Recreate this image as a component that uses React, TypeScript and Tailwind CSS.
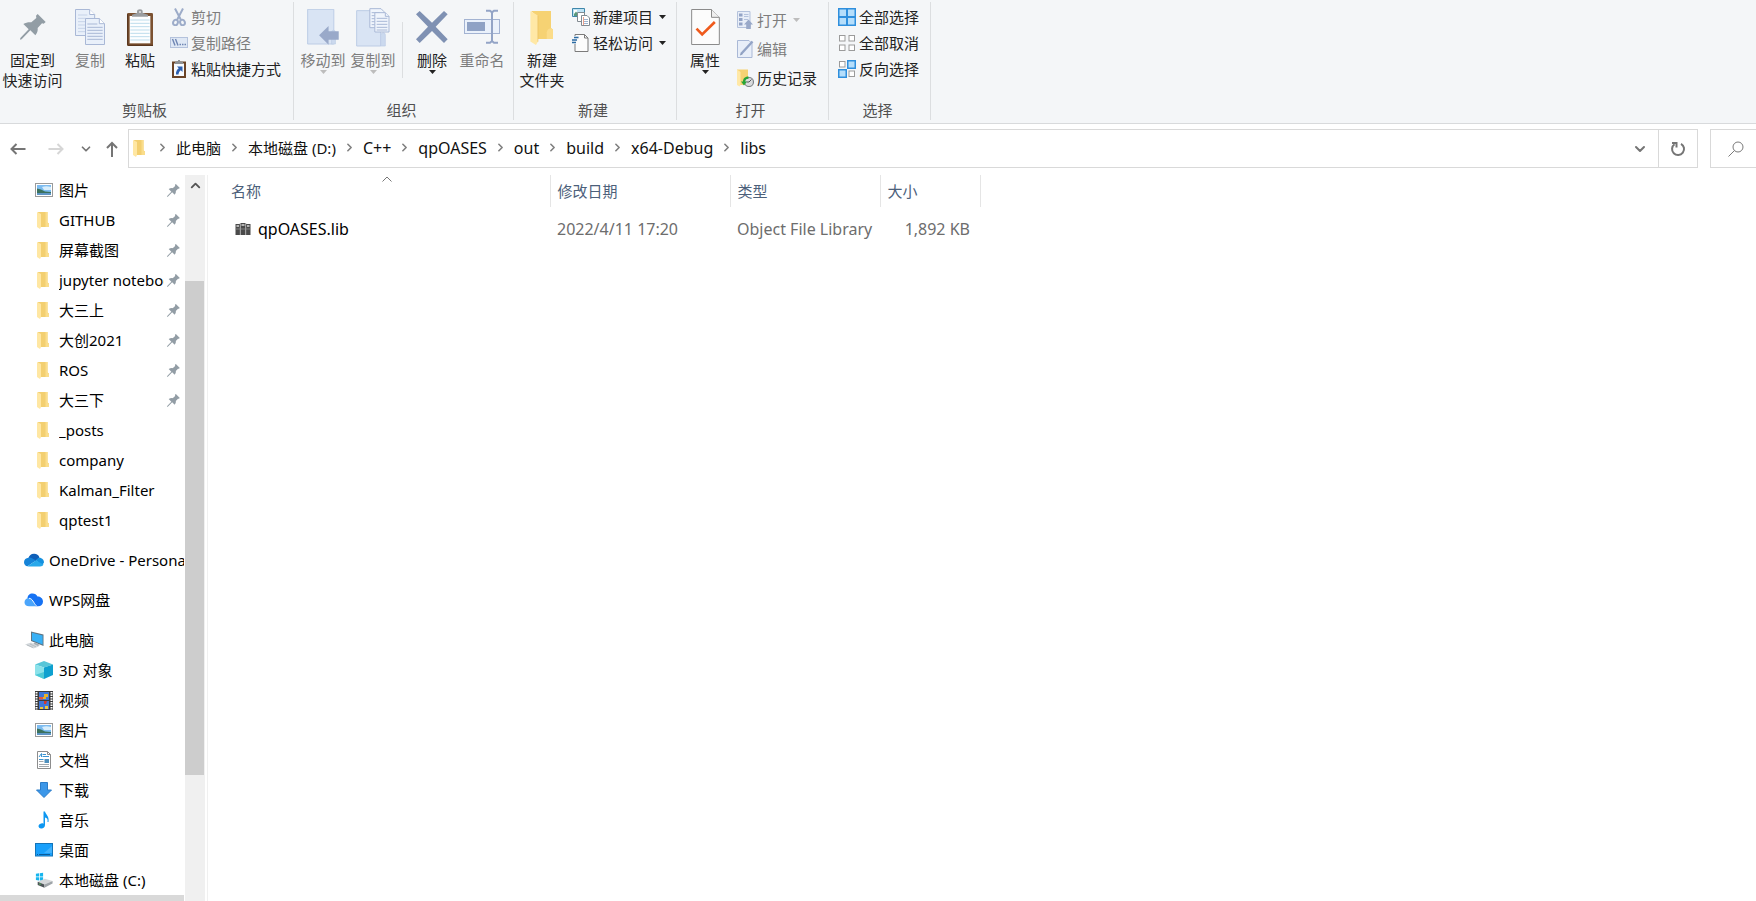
import type { ReactNode } from 'react';
import { ChevronDown, ChevronRight, ChevronUp } from 'lucide-react';

/* ---------- icons ---------- */

const PinIcon = ({ className }: { className: string }) => (
  <svg viewBox="60 42 78 78" className={className} aria-hidden="true">
    <path
      fill="#929da5"
      d="M113 42 137 66 131 71 126 70 113 84C114 92 112 99 106 106L91 91 65 118 60 119 61 114 86 88 70 72C78 67 87 66 94 67L109 54 108 47Z"
    />
  </svg>
);

const CopyIcon = () => (
  <svg viewBox="228 27 90 108" className="h-9 w-[30px]" aria-hidden="true">
    <g fill="#e9f0fa" stroke="#a9b8d6" strokeWidth="3">
      <path d="M229.500 28.500H272L287 43.500V106.500H229.500Z" />
      <path d="M272 28.500V43.500H287" fill="#fff" />
      <path d="M237 45H265M237 55H260M237 65H260M237 75H260M237 85H260M237 95H260" stroke="#c6d3e8" />
      <path d="M259.500 55.500H301L316.500 71V133.500H259.500Z" />
      <path d="M301 55.500V71H316.500" fill="#fff" />
      <path d="M265 72H295M265 82H311M265 91H311M265 100H311M265 109H311M265 118H311" stroke="#a9b8d6" />
    </g>
  </svg>
);

const PasteIcon = () => (
  <svg viewBox="384 24 78 111" className="h-[37px] w-[26px]" aria-hidden="true">
    <rect x="384" y="36" width="78" height="99" rx="4" fill="#7b5131" />
    <path d="M384 130V40h4v91h74v4h-74Z" fill="#59371f" />
    <path d="M392 45H454V127H392Z" fill="#fdfeff" />
    <path d="M394 57H452M394 67H452M394 77H452M394 87H452M394 97H452M394 107H452M394 117H452" stroke="#bddcec" strokeWidth="3" />
    <path d="M399 47V41L414 36V31C414 27 418 25 423 25S431 27 431 31V36L447 41V47Z" fill="#9a9da0" />
    <circle cx="423" cy="33" r="3" fill="#e6e6e6" />
  </svg>
);

const ScissorsIcon = () => (
  <svg viewBox="0 0 18 18" className="h-[18px] w-[18px]" fill="none" stroke="#9dacc9" aria-hidden="true">
    <path d="M5 0.500 11 12M13 0.500 7 12" strokeWidth="2" />
    <ellipse cx="5.500" cy="14.500" rx="2.300" ry="2.800" strokeWidth="2" transform="rotate(20 5.500 14.500)" />
    <ellipse cx="12.500" cy="14.500" rx="2.300" ry="2.800" strokeWidth="2" transform="rotate(-20 12.500 14.500)" />
  </svg>
);

const PathIcon = () => (
  <svg viewBox="0 0 18 18" className="h-[18px] w-[18px]" aria-hidden="true">
    <rect x="0.500" y="3.500" width="17" height="10" fill="#dfe8f5" stroke="#b4c2dc" />
    <path d="M2.500 5 5 11.500M5.500 5 8 11.500" stroke="#6f86b4" strokeWidth="1.400" />
    <path d="M9.500 10.500h1.500M12 10.500h1.500M14.500 10.500H16" stroke="#6f86b4" strokeWidth="1.500" />
  </svg>
);

const PasteShortcutIcon = () => (
  <svg viewBox="0 0 18 18" className="h-[18px] w-[18px]" aria-hidden="true">
    <path d="M3 2.500H15V17H3Z" fill="#f8fbff" stroke="#6b4427" strokeWidth="2" />
    <path d="M5 4V2L8 1V-0.500H10V1L13 2V4Z" fill="#8d9093" />
    <path d="M7 6.500H12.500V12L10.800 10.300C9 11.500 8.800 13 8.500 14.500H6C5.700 11.500 7 9.500 8.800 8.300Z" fill="#2b5fb0" />
  </svg>
);

const MoveToIcon = () => (
  <svg viewBox="350 27 99 110" className="h-9 w-[33px]" aria-hidden="true">
    <path d="M351 28H431V134H351Z" fill="#d9e4f4" stroke="#bccce5" strokeWidth="3" />
    <path d="M424 134V100Q424 92 430 92T436 98V134Z" fill="#cbd9ee" stroke="#bccce5" strokeWidth="2" />
    <path d="M386 107 415 79V95H446V121H415V136Z" fill="#99a9c9" />
  </svg>
);

const CopyToIcon = () => (
  <svg viewBox="209 20 102 117" className="h-[39px] w-[34px]" aria-hidden="true">
    <path d="M211 28H283V134H211Z" fill="#d9e4f4" stroke="#bccce5" strokeWidth="3" />
    <path d="M283 134V102Q284 95 290 94T297 100V134Z" fill="#cbd9ee" stroke="#bccce5" strokeWidth="2" />
    <g fill="#f0f5fc" stroke="#a9b8d6" strokeWidth="3">
      <path d="M250.500 22H284L293 31V79H250.500Z" />
      <path d="M256 34H280M256 43H270M256 52H270M256 61H270M256 70H270" />
      <path d="M265.500 34H297L308 45V92H265.500Z" />
      <path d="M297 34V45H308M271 51H303M271 60H303M271 69H303M271 78H303M271 86H303" />
    </g>
  </svg>
);

const DeleteIcon = () => (
  <svg viewBox="375 27 96 108" className="h-9 w-8" aria-hidden="true">
    <path
      d="M386 33 423 68 459 33 470 43 434 80 470 118 459 129 423 93 386 129 375 118 411 80 375 43Z"
      fill="#7f91b3"
    />
  </svg>
);

const RenameIcon = () => (
  <svg viewBox="519 27 108 108" className="h-9 w-9" aria-hidden="true">
    <rect x="520.500" y="58.500" width="105" height="42" fill="#eaf1fb" stroke="#a3b3d2" strokeWidth="3" />
    <rect x="528" y="66" width="54" height="27" fill="#8fa2c5" />
    <path d="M585 32H597L603 37 609 32H621M603 36V124M585 128H597L603 123 609 128H621" fill="none" stroke="#93a4c6" strokeWidth="6" />
  </svg>
);

const NewFolderIcon = () => (
  <svg viewBox="720 27 71 110" className="h-9 w-6" aria-hidden="true">
    <path d="M722 33H783V85L789 90V119H741V50Z" fill="#f6d273" />
    <path d="M770 119V98Q771 88 783 86L789 90V119Z" fill="#fbdc8a" />
    <path d="M720 34 743 47V127L737 137 720 126Z" fill="#ffe8a6" />
    <path d="M743 47V127" stroke="#e9bd5c" strokeWidth="2" />
  </svg>
);

const NewItemIcon = () => (
  <svg viewBox="0 0 18 18" className="h-[18px] w-[18px]" aria-hidden="true">
    <path d="M0.500 0.500H12.500V8.500H0.500Z" fill="#bfe3f4" stroke="#3f87ab" />
    <path d="M2 2H5V6H2Z" fill="#fff" />
    <path d="M2 6 4 3.500 6 6V8H2Z" fill="#5a9a7c" />
    <path d="M5.500 4.500H12.500V13.500H5.500Z" fill="#fff" stroke="#828a91" />
    <path d="M9.500 7.500H15L17.500 10V17.500H9.500Z" fill="#fff" stroke="#828a91" />
    <path d="M11 11.500H16M11 13.500H16M11 15.500H16" stroke="#9db4cf" />
    <path d="M11.500 9V17" stroke="#eda08b" />
  </svg>
);

const EasyAccessIcon = () => (
  <svg viewBox="0 0 18 18" className="h-[18px] w-[18px]" aria-hidden="true">
    <path d="M3 0.500H12.500L16 4V17.500H3Z" fill="#fcfcfc" stroke="#7b7b7b" />
    <path d="M12.500 0.500V4H16" fill="none" stroke="#7b7b7b" />
    <path d="M1 3.500H7M0 6H5.500M-1 8.500H4" stroke="#f4f6f8" strokeWidth="3" />
    <path d="M2 3.500H6.500M0 6H5M-1 8.500H4" stroke="#2b6ba3" strokeWidth="1.400" />
  </svg>
);

const PropertiesIcon = () => (
  <svg viewBox="395 27 86 108" className="h-9 w-[29px]" aria-hidden="true">
    <path d="M396.500 28.500H456L479.500 52V133.500H396.500Z" fill="#fcfcfc" stroke="#8b8b8b" strokeWidth="3" />
    <path d="M456 28.500V52H479.500" fill="#efefef" stroke="#8b8b8b" strokeWidth="3" />
    <path d="M411 86 428 103 466 66" fill="none" stroke="#ef5a1c" strokeWidth="8" />
  </svg>
);

const OpenIcon = () => (
  <svg viewBox="0 0 18 18" className="h-[18px] w-[18px]" aria-hidden="true">
    <path d="M1.500 0.500H14V16.500H1.500Z" fill="#e8eef8" stroke="#b4c2dc" />
    <path d="M3 2.500H6.500V5.500H3ZM3 7H6.500V10H3ZM3 11.500H6.500V14.500H3Z" fill="#93a4c6" />
    <path d="M8 3.500H12.500M8 5.500H12.500M8 8.500H12" stroke="#b4c2dc" />
    <path d="M12.500 8.500 17 13.500H14.800V18H10.200V13.500H8Z" fill="#99a9c9" />
  </svg>
);

const EditIcon = () => (
  <svg viewBox="0 0 18 18" className="h-[18px] w-[18px]" aria-hidden="true">
    <path d="M1.500 0.500H13L16 3.500V17.500H1.500Z" fill="#e8eef8" stroke="#a9b8d6" />
    <path d="M16.500 1.500 5.500 13.500" stroke="#93a4c6" strokeWidth="2.400" />
    <path d="M4 15.500 4.800 12.600 6.600 14.200Z" fill="#7f91b3" />
  </svg>
);

const HistoryIcon = () => (
  <svg viewBox="0 0 18 18" className="h-[18px] w-[18px]" aria-hidden="true">
    <path d="M1 0.500H12V16H4Z" fill="#f6d273" />
    <path d="M1 0.500 4.500 3V16L3.500 17.500 1 16Z" fill="#ffe8a6" />
    <circle cx="13" cy="13" r="4.500" fill="#d9dbdd" stroke="#7f8589" strokeWidth="1.200" />
    <path d="M13 13 15.500 10.500M13 13H10.500" stroke="#54595d" />
    <path d="M12.500 7.500C8.500 7.500 7 10 7 12.500H5L8 16.500 11 12.500H9.200C9.200 11 10.200 9.800 12.500 9.800Z" fill="#27a537" />
  </svg>
);

const tiles = [[0, 0], [1, 0], [0, 1], [1, 1]];

const SelectIcon = ({ mode }: { mode: 'all' | 'none' | 'invert' }) => (
  <svg viewBox="0 0 18 18" className="h-[18px] w-[18px]" aria-hidden="true">
    {mode === 'all' && <path d="M0 0H18V18H0Z" fill="#2f8fdd" />}
    {tiles.map(([col, row]) => {
      const on = mode === 'all' || (mode === 'invert' && col !== row);
      if (mode === 'all') {
        return <rect key={`${col}${row}`} x={1.500 + col * 8.500} y={1.500 + row * 8.500} width="6.500" height="6.500" fill="#b5defb" />;
      }
      return (
        <rect
          key={`${col}${row}`}
          x={(on ? 0.750 : 1.500) + col * (on ? 9 : 9.500)}
          y={(on ? 0.750 : 1.500) + row * (on ? 9 : 9.500)}
          width={on ? 7.500 : 5.500}
          height={on ? 7.500 : 5.500}
          fill={on ? '#b5defb' : '#fff'}
          stroke={on ? '#2f8fdd' : '#9b9b9b'}
          strokeWidth={on ? 1.500 : 1}
        />
      );
    })}
  </svg>
);

const FolderIcon = ({ className = 'h-[18px] w-[18px]' }: { className?: string }) => (
  <svg viewBox="0 0 18 18" className={className} aria-hidden="true">
    <path d="M3 1H12.500V11.500L14 12.500V16H5Z" fill="#f3cf70" />
    <path d="M10.500 1H12.500V11.500L14 12.500V16H10.500Z" fill="#fadd8b" />
    <path d="M2 1 6 3V16L5 18 2 16Z" fill="#ffe7a3" />
  </svg>
);

const PictureIcon = () => (
  <svg viewBox="0 0 18 18" className="h-[18px] w-[18px]" aria-hidden="true">
    <rect x="0.500" y="2.500" width="17" height="13" fill="#fff" stroke="#9a9a9a" />
    <rect x="2" y="4" width="14" height="10" fill="#7dbcf0" />
    <path d="M7 6Q11 4.500 16 6V9H9Z" fill="#d7edfb" />
    <path d="M2 7.500Q6 8 10 10.500L16 11V12H2Z" fill="#3a715e" />
    <path d="M2 12H16V14H2Z" fill="#5f95c4" />
  </svg>
);

const OneDriveIcon = () => (
  <svg viewBox="0 0 20 14" className="h-3.5 w-5" aria-hidden="true">
    <path d="M4.500 5A5.800 5.800 0 0 1 15.500 4.500L11 8.500Z" fill="#0f5fb8" />
    <path d="M4.500 4.700C2 4.800 0 6.700 0 9.200 0 11.500 1.500 13 3.500 13.300L12 7.500 8 5.200C7 4.700 5.500 4.500 4.500 4.700Z" fill="#1583d8" />
    <path d="M12 7.500C13 5 15.500 4.200 16.800 5 19 5.700 20 7.500 20 9.500L18 12.500Z" fill="#1490df" />
    <path d="M3.500 13.300 12 7.400 19.500 11.500C18.800 12.800 17.800 13.500 16 13.500H4.500Z" fill="#28a8ea" />
  </svg>
);

const WpsCloudIcon = () => (
  <svg viewBox="0 0 20 14" className="h-3.5 w-5" aria-hidden="true">
    <path d="M3.500 5.500C3.500 2.500 5.500 0.500 8.500 0.500 11 0.500 12.500 1.700 13.500 3.500 16.500 3.500 19 5.500 19 8.500S17 13.300 14 13.300H11.500Z" fill="#1672f3" />
    <path d="M4.500 5C2 5.500 0.500 7 0.500 9.300 0.500 11.800 2.300 13.300 5 13.300H11.500C10.500 9.500 8.500 5.500 4.500 5Z" fill="#4ba5fb" />
    <path d="M5 5.300C8.500 5.300 9.500 10 12.500 13" fill="none" stroke="#fff" strokeWidth="0.900" />
  </svg>
);

const ComputerIcon = () => (
  <svg viewBox="0 0 20 18" className="h-[18px] w-5" aria-hidden="true">
    <path d="M7 0.500 19.500 3.500V15L7 10Z" fill="#5f7482" />
    <path d="M8 1.800 18.600 4.400V13.500L8 9.300Z" fill="#38b0f5" />
    <path d="M11 11.500 16 14 13 15.500 9 13Z" fill="#a5adb3" />
    <path d="M1 13.500 7 11.500 15 15.500 9.500 17.500Z" fill="#d3d8dc" />
    <path d="M3 14 9 16.500M6 13 12 15.800" stroke="#aab1b6" strokeWidth="0.700" />
  </svg>
);

const CubeIcon = () => (
  <svg viewBox="0 0 18 18" className="h-[18px] w-[18px]" aria-hidden="true">
    <path d="M0 3.500 9 0 18 3.500 9 6.500Z" fill="#58c6d8" />
    <path d="M0 3.500 9 6.500V18L0 14Z" fill="#8be2ea" />
    <path d="M18 3.500 9 6.500V18L18 14Z" fill="#0ea0cf" />
    <path d="M0 14 9 11V18Z" fill="#4cc9d6" />
  </svg>
);

const VideoIcon = () => (
  <svg viewBox="0 0 18 19" className="h-[19px] w-[18px]" aria-hidden="true">
    <rect width="18" height="19" fill="#3b3b3b" />
    <path d="M1.500 1V19M16.500 1V19" stroke="#fff" strokeWidth="2" strokeDasharray="1.500 1" />
    <rect x="4" y="1" width="10" height="8" fill="#3f76d8" />
    <rect x="4" y="10" width="10" height="8" fill="#3f76d8" />
    <path d="M9 3H13V6H11V8H8V6H9Z" fill="#e8b12c" />
    <path d="M4 6H8V8.500H4Z" fill="#e0563d" />
    <path d="M9 10H12L11 13H9Z" fill="#d33a2c" />
    <path d="M5 16H8V18H5ZM10 15H13V18H10Z" fill="#ecc640" />
  </svg>
);

const DocumentIcon = () => (
  <svg viewBox="0 0 18 18" className="h-[18px] w-[18px]" aria-hidden="true">
    <path d="M2.500 0.500H12.500L15.500 3.500V17.500H2.500Z" fill="#fff" stroke="#8d8d8d" />
    <path d="M12.500 0.500V3.500H15.500" fill="none" stroke="#8d8d8d" />
    <path d="M4 6 6.500 2.500V6M7.500 3.500H11M7.500 5.500H14M4 8.500H8.500" fill="none" stroke="#3993d2" />
    <rect x="9.500" y="8" width="4.500" height="4" fill="#4e90bd" />
    <path d="M4 10.500H8.500M4 13.500H14M4 15.500H14" stroke="#a2a8ad" />
  </svg>
);

const DownloadIcon = () => (
  <svg viewBox="0 0 18 18" className="h-[18px] w-[18px]" aria-hidden="true">
    <path d="M5.500 1.500H12.500V9H16.500L9 16.500 1.500 9H5.500Z" fill="#3c97e8" stroke="#2b7cc9" />
  </svg>
);

const MusicIcon = () => (
  <svg viewBox="0 0 18 18" className="h-[18px] w-[18px]" aria-hidden="true">
    <path d="M8.500 0.500H10C10.500 3.500 14.500 5 13.500 11H12.500C13 8 12 7 10 6.500V14C10 16.500 8 17.800 6 17.500 3.500 17.200 2.500 14.500 5 13 6.200 12.200 7.500 12.200 8.500 12.700Z" fill="#0d97f1" />
  </svg>
);

const DesktopIcon = () => (
  <svg viewBox="0 0 18 18" className="h-[18px] w-[18px]" aria-hidden="true">
    <rect x="0.500" y="2.500" width="17" height="12.500" fill="#19a0fb" stroke="#1474b8" />
    <path d="M17 5V12H9Z" fill="#42b2fd" />
    <path d="M2 13.500H16" stroke="#0b5c9b" strokeDasharray="1 1 11 1" />
  </svg>
);

const DriveIcon = () => (
  <svg viewBox="0 0 20 18" className="h-[18px] w-5" aria-hidden="true">
    <path d="M1 2 4.500 1.500V5.200H1ZM5.300 1.400 9 1V5.200H5.300ZM1 6H4.500V9.500L1 9ZM5.300 6H9V10L5.300 9.500Z" fill="#17b5ee" />
    <path d="M3 11 11 7.500 19.500 10 10.500 14Z" fill="#d5d8da" />
    <path d="M3 11 10.500 14V17.500L3 14.500Z" fill="#4d5457" />
    <path d="M10.500 14 19.500 10V13L10.500 17.500Z" fill="#9fa5a9" />
    <path d="M4.500 13.500H6.500" stroke="#5dd268" />
  </svg>
);

const LibFileIcon = () => (
  <svg viewBox="0 0 16 14" className="h-3.5 w-4 shrink-0" aria-hidden="true">
    <path d="M0.500 2H5V13H0.500ZM5.500 1H10.500V13H5.500ZM11 2H15.500V13H11Z" fill="#4a4a4a" />
    <path d="M1.500 4H4M6.500 3H9.500M12 4H14.500" stroke="#d9d9d9" strokeWidth="1.500" />
    <path d="M0.500 7H15.500M5.200 1V13M10.800 1V13" stroke="#999" strokeWidth="0.700" />
  </svg>
);

/* ---------- ribbon ---------- */

const Caret = ({ className = '' }: { className?: string }) => (
  <svg viewBox="0 0 7 4" className={`h-1 w-[7px] shrink-0 ${className}`} aria-hidden="true">
    <path d="M0 0H7L3.500 4Z" fill="currentColor" />
  </svg>
);

interface ButtonProps {
  icon: ReactNode;
  label: string;
  second?: string;
  size?: string;
  caret?: boolean;
  disabled?: boolean;
}

function BigButton({ icon, label, second, size = 'w-[50px]', caret, disabled }: ButtonProps) {
  return (
    <button
      disabled={disabled}
      className={`flex shrink-0 flex-col items-center whitespace-nowrap leading-5 hover:bg-[#e5f1fb] disabled:text-[#7d7d7d] ${size}`}
    >
      <span className="flex h-12 items-center justify-center pt-0.5">{icon}</span>
      <span>{label}</span>
      {second && <span>{second}</span>}
      {caret && <Caret className={disabled ? 'text-[#bdbdbd]' : ''} />}
    </button>
  );
}

function SmallButton({ icon, label, caret, disabled, size = 'h-[26px]' }: ButtonProps) {
  return (
    <button
      disabled={disabled}
      className={`flex items-center gap-[3px] whitespace-nowrap leading-5 hover:bg-[#e5f1fb] disabled:text-[#7d7d7d] ${size}`}
    >
      {icon}
      <span>{label}</span>
      {caret && <Caret className={disabled ? 'ml-[3px] text-[#bdbdbd]' : 'ml-[3px]'} />}
    </button>
  );
}

function Group({ title, className, children }: { title: string; className: string; children: ReactNode }) {
  return (
    <section aria-label={title} className={`flex h-[118px] shrink-0 flex-col justify-between border-r border-[#dcdee0] ${className}`}>
      <div className="flex items-start">{children}</div>
      <h2 className="pr-1 text-center leading-5 text-[#505050]">{title}</h2>
    </section>
  );
}

function Ribbon() {
  return (
    <header className="flex border-b border-[#d8dadc] bg-[#f4f6f8] pt-[2px] pb-[3px] text-[#222]">
      <Group title="剪贴板" className="w-[294px]">
        <BigButton icon={<PinIcon className="h-[26px] w-[26px]" />} label="固定到" second="快速访问" size="w-[65px]" />
        <BigButton icon={<CopyIcon />} label="复制" disabled />
        <BigButton icon={<PasteIcon />} label="粘贴" />
        <div className="ml-[5px] flex flex-col pt-0.5">
          <SmallButton icon={<ScissorsIcon />} label="剪切" disabled />
          <SmallButton icon={<PathIcon />} label="复制路径" disabled />
          <SmallButton icon={<PasteShortcutIcon />} label="粘贴快捷方式" />
        </div>
      </Group>

      <Group title="组织" className="w-[220px]">
        <BigButton icon={<MoveToIcon />} label="移动到" size="ml-1 w-[50px]" caret disabled />
        <BigButton icon={<CopyToIcon />} label="复制到" caret disabled />
        <div className="mx-1 mt-5 h-14 w-px bg-[#dcdee0]" />
        <BigButton icon={<DeleteIcon />} label="删除" caret />
        <BigButton icon={<RenameIcon />} label="重命名" disabled />
      </Group>

      <Group title="新建" className="w-[163px]">
        <BigButton icon={<NewFolderIcon />} label="新建" second="文件夹" size="w-[56px]" />
        <div className="flex flex-col pt-0.5 pl-0.5">
          <SmallButton icon={<NewItemIcon />} label="新建项目" caret />
          <SmallButton icon={<EasyAccessIcon />} label="轻松访问" caret />
        </div>
      </Group>

      <Group title="打开" className="w-[152px]">
        <BigButton icon={<PropertiesIcon />} label="属性" size="w-[56px]" caret />
        <div className="flex flex-col pt-[3px] pl-[3px]">
          <SmallButton icon={<OpenIcon />} label="打开" size="h-[29px]" caret disabled />
          <SmallButton icon={<EditIcon />} label="编辑" size="h-[29px]" disabled />
          <SmallButton icon={<HistoryIcon />} label="历史记录" size="h-[29px]" />
        </div>
      </Group>

      <Group title="选择" className="w-[102px]">
        <div className="ml-[9px] flex flex-col pt-0.5">
          <SmallButton icon={<SelectIcon mode="all" />} label="全部选择" />
          <SmallButton icon={<SelectIcon mode="none" />} label="全部取消" />
          <SmallButton icon={<SelectIcon mode="invert" />} label="反向选择" />
        </div>
      </Group>
    </header>
  );
}

/* ---------- address bar ---------- */

const drives = ['此电脑', '本地磁盘 (D:)'];
const folders = ['C++', 'qpOASES', 'out', 'build', 'x64-Debug', 'libs'];

const Arrow = ({ d }: { d: string }) => (
  <svg viewBox="0 0 16 16" className="h-4 w-4" fill="none" stroke="currentColor" strokeWidth="2" aria-hidden="true">
    <path d={d} />
  </svg>
);

const Crumb = ({ name, className = '' }: { name: string; className?: string }) => (
  <li className={`flex items-center ${className}`}>
    <ChevronRight size={13} strokeWidth={3} className="mx-[7px] shrink-0 text-[#808080]" />
    <a href="#">{name}</a>
  </li>
);

function AddressBar() {
  return (
    <nav aria-label="地址" className="flex pt-[5px] pb-[7px] text-[#757575]">
      <button aria-label="后退" className="flex w-9 items-center justify-center">
        <Arrow d="M15.500 8H1.500M6.500 3 1.500 8 6.500 13" />
      </button>
      <button aria-label="前进" disabled className="flex w-10 items-center justify-center text-[#d6d6d6]">
        <Arrow d="M0.500 8H14.500M9.500 3 14.500 8 9.500 13" />
      </button>
      <button aria-label="最近浏览的位置" className="flex w-5 items-center justify-center">
        <ChevronDown size={14} strokeWidth={3} />
      </button>
      <button aria-label="上移" className="flex w-8 items-center justify-center">
        <Arrow d="M8 16V2M3 7 8 2 13 7" />
      </button>
      <div className="flex h-[39px] min-w-0 flex-1 border border-[#d9d9d9]">
        <ol className="flex min-w-0 flex-1 items-center overflow-hidden pb-0.5 whitespace-nowrap text-[#111]">
          <li className="pl-0.5">
            <FolderIcon />
          </li>
          {drives.map((name) => (
            <Crumb key={name} name={name} />
          ))}
          {folders.map((name) => (
            <Crumb key={name} name={name} className="text-base leading-5" />
          ))}
        </ol>
        <button aria-label="以前的位置" className="flex w-9 items-center justify-center">
          <ChevronDown size={16} strokeWidth={3} />
        </button>
        <button aria-label="刷新" className="flex w-[39px] items-center justify-center border-l border-[#d9d9d9]">
          <svg viewBox="0 0 16 16" className="h-4 w-4" fill="none" stroke="currentColor" strokeWidth="2" aria-hidden="true">
            <path d="M11 2.800A6 6 0 1 1 4.500 3.200M2 2H6.500V6.500" />
          </svg>
        </button>
      </div>
      <label className="ml-3 flex w-[46px] items-center border-y border-l border-[#d9d9d9] pl-[17px]">
        <svg viewBox="0 0 16 16" className="h-4 w-4 shrink-0" fill="none" stroke="#7a7a7a" aria-hidden="true">
          <circle cx="10" cy="6" r="5" />
          <path d="M6.500 9.500 0.500 15.500" />
        </svg>
        <input type="search" aria-label="搜索" className="min-w-0 flex-1 bg-transparent outline-none" />
      </label>
    </nav>
  );
}

/* ---------- navigation tree ---------- */

interface Place {
  name: string;
  icon?: ReactNode;
  pinned?: boolean;
}

const quickAccess: Place[] = [
  { name: '图片', icon: <PictureIcon />, pinned: true },
  { name: 'GITHUB', pinned: true },
  { name: '屏幕截图', pinned: true },
  { name: 'jupyter notebook', pinned: true },
  { name: '大三上', pinned: true },
  { name: '大创2021', pinned: true },
  { name: 'ROS', pinned: true },
  { name: '大三下', pinned: true },
  { name: '_posts' },
  { name: 'company' },
  { name: 'Kalman_Filter' },
  { name: 'qptest1' },
];

const thisPc: Place[] = [
  { name: '3D 对象', icon: <CubeIcon /> },
  { name: '视频', icon: <VideoIcon /> },
  { name: '图片', icon: <PictureIcon /> },
  { name: '文档', icon: <DocumentIcon /> },
  { name: '下载', icon: <DownloadIcon /> },
  { name: '音乐', icon: <MusicIcon /> },
  { name: '桌面', icon: <DesktopIcon /> },
  { name: '本地磁盘 (C:)', icon: <DriveIcon /> },
];

function PlaceList({ places }: { places: Place[] }) {
  return (
    <ul>
      {places.map(({ name, icon, pinned }) => (
        <li key={name}>
          <a href="#" className="flex h-[30px] items-center pl-[35px] pr-1 hover:bg-[#e5f3ff]">
            <span className="flex w-[18px] shrink-0 justify-center">{icon ?? <FolderIcon />}</span>
            <span className="ml-1.5 min-w-0 flex-1 overflow-hidden whitespace-nowrap">{name}</span>
            {pinned && <PinIcon className="ml-[3px] h-[13px] w-[13px] shrink-0" />}
          </a>
        </li>
      ))}
    </ul>
  );
}

const RootPlace = ({ name, icon }: Place) => (
  <a href="#" className="flex h-[30px] items-center gap-[5px] overflow-hidden whitespace-nowrap pl-6 hover:bg-[#e5f3ff]">
    <span className="shrink-0">{icon}</span>
    <span>{name}</span>
  </a>
);

function Sidebar() {
  return (
    <aside className="flex w-[208px] shrink-0 border-r border-[#f0f0f0]">
      <div className="flex min-h-0 w-[184px] flex-col">
        <div className="flex min-h-0 flex-1 flex-col gap-2.5 overflow-hidden">
          <PlaceList places={quickAccess} />
          <RootPlace name="OneDrive - Personal" icon={<OneDriveIcon />} />
          <RootPlace name="WPS网盘" icon={<WpsCloudIcon />} />
          <div>
            <RootPlace name="此电脑" icon={<ComputerIcon />} />
            <PlaceList places={thisPc} />
          </div>
        </div>
        <div className="h-1.5 bg-[#d9d9d9]" />
      </div>
      <div className="ml-px flex w-5 flex-col bg-[#f0f0f0]">
        <button aria-label="向上滚动" className="flex h-5 items-center justify-center text-[#555]">
          <ChevronUp size={15} strokeWidth={3} />
        </button>
        <div className="mt-[86px] h-[68%] w-[19px] bg-[#cdcdcd]" />
      </div>
    </aside>
  );
}

/* ---------- file list ---------- */

const files = [{ name: 'qpOASES.lib', modified: '2022/4/11 17:20', type: 'Object File Library', size: '1,892 KB' }];

function FileList() {
  return (
    <main className="min-w-0 flex-1 overflow-hidden">
      <table className="w-[772px] table-fixed whitespace-nowrap text-left text-[#6d6d6d]">
        <thead className="text-[#4c607a]">
          <tr className="h-8 *:border-r *:border-[#e5e5e5] *:font-normal">
            <th className="relative w-[342px] pl-[23px]">
              名称
              <span className="absolute top-0 right-0 left-4 flex justify-center text-[#777]">
                <svg viewBox="0 0 10 8" className="h-2 w-2.5" fill="none" stroke="currentColor" aria-hidden="true">
                  <path d="M0.500 6.500 5 2 9.500 6.500" />
                </svg>
              </span>
            </th>
            <th className="w-[180px] pl-[7px]">修改日期</th>
            <th className="w-[150px] pl-[7px]">类型</th>
            <th className="w-[100px] pl-[7px]">大小</th>
          </tr>
        </thead>
        <tbody className="text-base leading-5">
          {files.map((file) => (
            <tr key={file.name} className="h-11">
              <td className="pl-[27px] text-black">
                <span className="flex items-center gap-[7px]">
                  <LibFileIcon />
                  {file.name}
                </span>
              </td>
              <td className="pl-[7px]">{file.modified}</td>
              <td className="pl-[7px]">{file.type}</td>
              <td className="pr-2.5 text-right">{file.size}</td>
            </tr>
          ))}
        </tbody>
      </table>
    </main>
  );
}

export default function App() {
  return (
    <div className="flex h-screen flex-col overflow-hidden bg-white font-['Noto_Sans','Noto_Sans_CJK_SC',sans-serif] text-[15px] leading-5 text-black">
      <Ribbon />
      <AddressBar />
      <div className="flex min-h-0 flex-1">
        <Sidebar />
        <FileList />
      </div>
    </div>
  );
}
